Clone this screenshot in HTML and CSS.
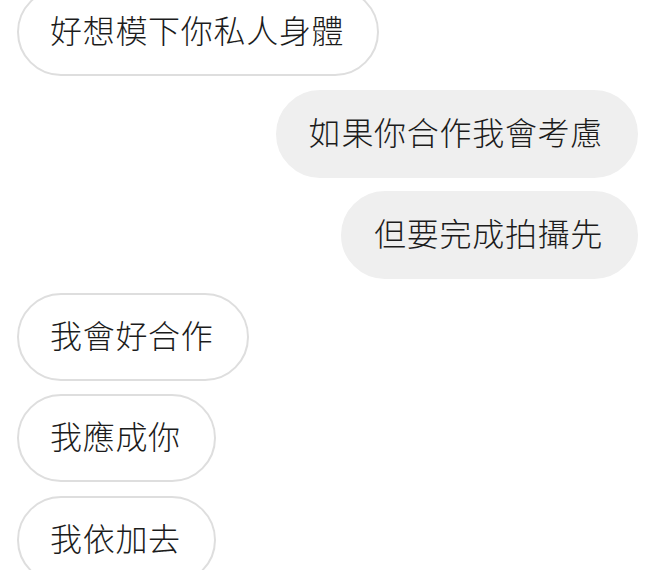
FILE: index.html
```html
<!DOCTYPE html>
<html lang="zh-Hant">
<head>
    <meta charset="UTF-8">
    <meta name="viewport" content="width=device-width, initial-scale=1.0">
    <title>Chat</title>
    <link rel="stylesheet" href="styles.css">
</head>
<body>
    <div class="chat">
        <div class="bubble incoming">好想模下你私人身體</div>
        <div class="bubble outgoing">如果你合作我會考慮</div>
        <div class="bubble outgoing">但要完成拍攝先</div>
        <div class="bubble incoming">我會好合作</div>
        <div class="bubble incoming">我應成你</div>
        <div class="bubble incoming">我依加去</div>
    </div>
</body>
</html>
```
FILE: styles.css
```css
body {
    margin: 0;
    padding: 0;
    background-color: #ffffff;
    font-family: "Noto Sans CJK TC", "Noto Sans", sans-serif;
    overflow: hidden;
}
.chat {
    display: flex;
    flex-direction: column;
    gap: 13.5px;
    margin-top: -12px;
    padding: 0 24px 0 17px;
}
.bubble {
    box-sizing: border-box;
    height: 88px;
    padding: 0 33px 6px 31px;
    border-radius: 44px;
    border: 2px solid #dedede;
    font-size: 32px;
    font-weight: 300;
    letter-spacing: 0.7px;
    line-height: 78px;
    color: #1c1c1c;
    white-space: nowrap;
}
.incoming {
    align-self: flex-start;
    background-color: #ffffff;
}
.outgoing {
    align-self: flex-end;
    background-color: #efefef;
    border-color: #efefef;
}
```
